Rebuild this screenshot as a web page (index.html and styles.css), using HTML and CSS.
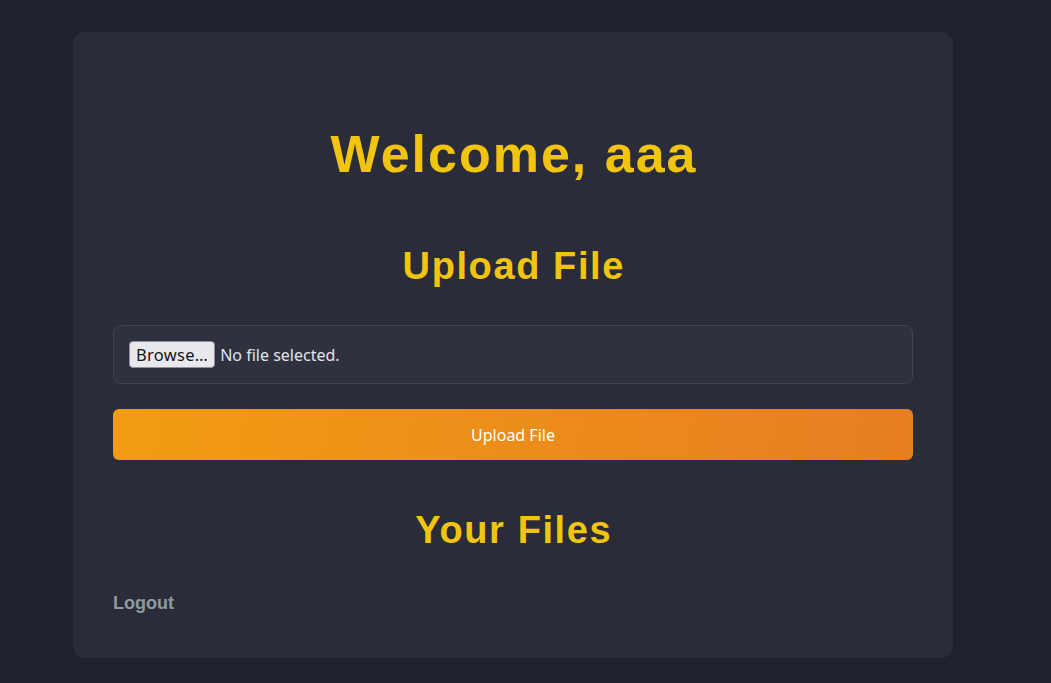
FILE: index.html
```html
<!DOCTYPE html>
<html lang="en">
<head>
<meta charset="utf-8">
<title>Dashboard</title>
<link rel="stylesheet" href="styles.css">
</head>
<body>
  <main class="card">
    <h1 class="title">Welcome, aaa</h1>
    <h2 class="section-title section-upload">Upload File</h2>
    <form class="upload-form">
      <div class="file-field">
        <span class="browse-btn">Browse…</span>
        <span class="file-status">No file selected.</span>
      </div>
      <button type="button" class="upload-btn">Upload File</button>
    </form>
    <h2 class="section-title section-files">Your Files</h2>
    <a class="logout" href="#">Logout</a>
  </main>
</body>
</html>
```

FILE: styles.css
```css
html, body {
  margin: 0;
  padding: 0;
}

body {
  background: #1e222c;
  min-height: 683px;
  font-family: "Liberation Sans", Arial, sans-serif;
  padding: 32px 0 25px 73px;
  box-sizing: border-box;
}

.card {
  width: 880px;
  box-sizing: border-box;
  background: #2a2d39;
  border-radius: 12px;
  padding: 40px 40px 40px;
  display: flex;
  flex-direction: column;
}

.title {
  margin: 52px 0 0;
  text-align: center;
  color: #f1c40f;
  font-size: 52px;
  line-height: 60px;
  font-weight: 700;
  letter-spacing: 2px;
  text-indent: 2px;
}

.section-title {
  margin: 0;
  text-align: center;
  color: #f1c40f;
  font-size: 38px;
  line-height: 44px;
  font-weight: 700;
  letter-spacing: 1.6px;
  text-indent: 1.6px;
}

.section-upload {
  margin-top: 60px;
}

.section-files {
  margin-top: 48px;
}

.upload-form {
  margin: 37px 0 0;
  display: flex;
  flex-direction: column;
  gap: 25px;
}

.file-field {
  display: flex;
  align-items: center;
  gap: 5px;
  height: 59px;
  box-sizing: border-box;
  padding: 0 15px;
  background: #2f323e;
  border: 1px solid #41444f;
  border-radius: 8px;
  font-family: "Noto Sans", "Open Sans", sans-serif;
  font-size: 16px;
}

.browse-btn {
  display: inline-flex;
  align-items: center;
  height: 27px;
  box-sizing: border-box;
  padding: 0 6px;
  background: #e9e9ed;
  border: 1px solid #8f8f9d;
  border-radius: 4px;
  color: #15141a;
  font-size: 16.5px;
  letter-spacing: 0.3px;
}

.file-status {
  color: #e4e4e6;
}

.upload-btn {
  height: 51px;
  border: none;
  border-radius: 6px;
  background: linear-gradient(100deg, #f39c12 0%, #e67e22 100%);
  color: #ffffff;
  font-family: "Noto Sans", "Open Sans", sans-serif;
  font-size: 16px;
  cursor: pointer;
}

.logout {
  align-self: flex-start;
  margin: 41px 0 4px;
  color: #8f9a9d;
  font-size: 18px;
  line-height: 21px;
  font-weight: 700;
  text-decoration: none;
}
```
